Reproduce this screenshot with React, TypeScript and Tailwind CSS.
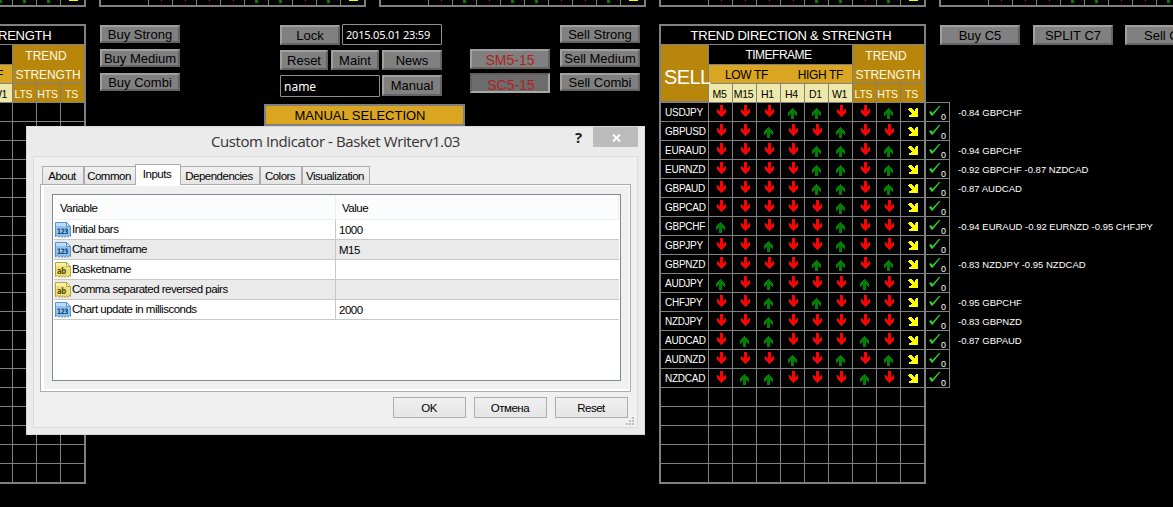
import type { ReactNode } from "react";
import clsx from "clsx";

type Row = { pair: string; signals: string; note?: string };

// u = up, d = down, one letter per column from M5 to HTS
const sellRows: Row[] = [
  { pair: "USDJPY", signals: "ddduuddu", note: "-0.84 GBPCHF" },
  { pair: "GBPUSD", signals: "dduddudd" },
  { pair: "EURAUD", signals: "dddduudu", note: "-0.94 GBPCHF" },
  { pair: "EURNZD", signals: "dddduudu", note: "-0.92 GBPCHF -0.87 NZDCAD" },
  { pair: "GBPAUD", signals: "dddduudu", note: "-0.87 AUDCAD" },
  { pair: "GBPCAD", signals: "dddddudd" },
  { pair: "GBPCHF", signals: "uddddudd", note: "-0.94 EURAUD -0.92 EURNZD -0.95 CHFJPY" },
  { pair: "GBPJPY", signals: "dduddudd" },
  { pair: "GBPNZD", signals: "dddduudu", note: "-0.83 NZDJPY -0.95 NZDCAD" },
  { pair: "AUDJPY", signals: "ududddud" },
  { pair: "CHFJPY", signals: "ddududdd", note: "-0.95 GBPCHF" },
  { pair: "NZDJPY", signals: "dduddddd", note: "-0.83 GBPNZD" },
  { pair: "AUDCAD", signals: "duudddud", note: "-0.87 GBPAUD" },
  { pair: "AUDNZD", signals: "dddududu" },
  { pair: "NZDCAD", signals: "duudddud" },
];

const upperTables = ["dddduuuu", "dddduudu", "duduuddu", "dddduudu", "ddduuddu"];
const timeframes = ["M5", "M15", "H1", "H4", "D1", "W1"];

const inputs = [
  { kind: "123", name: "Initial bars", value: "1000" },
  { kind: "123", name: "Chart timeframe", value: "M15" },
  { kind: "ab", name: "Basketname", value: "" },
  { kind: "ab", name: "Comma separated reversed pairs", value: "" },
  { kind: "123", name: "Chart update in millisconds", value: "2000" },
];

function Arrow({ dir }: { dir: string }) {
  return (
    <svg width="23" height="18" viewBox="0 0 23 18" className="block" shapeRendering="crispEdges">
      {dir === "d" && <path fill="#ff0000" d="M11 2h3v6h1v-1h1v-1h1v4h-1v1h-1v1h-1v1h-1v1h-1v-1h-1v-1h-1v-1h-1v-1h-1v-4h1v1h1v1h1z" />}
      {dir === "u" && <path fill="#008000" d="M11 5h1v1h1v1h1v1h1v1h1v4h-1v-1h-1v-1h-1v5h-3v-5h-1v1h-1v1h-1v-4h1v-1h1v-1h1v-1h1z" />}
      {dir === "s" && <path fill="#ffff00" d="M8 5h3v1h1v1h1v1h1v-2h1v-1h2v9h-9v-2h2v-1h1v-1h-1v-1h-1v-1h-1v-1h-1v-1h1z" />}
    </svg>
  );
}

function Cell({ className, children }: { className?: string; children?: ReactNode }) {
  return <div className={clsx("min-w-0 whitespace-nowrap", className ?? "bg-black")}>{children}</div>;
}

function SignalCells({ signals }: { signals: string }) {
  return (
    <>
      {(signals ? signals + "s" : "         ").split("").map((s, i) => (
        <Cell key={i}><Arrow dir={s} /></Cell>
      ))}
    </>
  );
}

function TrendTable({ side, rows }: { side: string; rows: Row[] }) {
  const all = Array.from({ length: 20 }, (_, i) => rows[i] ?? { pair: "", signals: "" });
  return (
    <div className="grid h-[460px] w-[267px] shrink-0 grid-cols-[47px_repeat(9,23px)] grid-rows-[18px_19px_18px_18px_repeat(20,18px)] gap-px border-2 border-[#808080] bg-[#808080] text-white">
      <Cell className="col-span-10 bg-black pr-[3px] text-center text-[13px] leading-[19px] tracking-[-0.25px]">TREND DIRECTION &amp; STRENGTH</Cell>
      <Cell className="row-span-3 mb-px bg-[#b8860b] pl-[3px] pt-[21px] text-[20px] leading-[23px] tracking-[-0.6px]"><span className="relative">{side}</span></Cell>
      <Cell className="col-span-6 bg-black pr-[4px] text-center text-[12px] leading-[20px] tracking-[-0.5px]">TIMEFRAME</Cell>
      <Cell className="col-span-3 row-span-2 bg-[#b8860b] pt-[2px] text-center text-[12px] leading-[19px] text-[#fffbe8]">
        <div className="pr-[5px]">TREND</div>
        <div className="pr-px tracking-[-0.1px]">STRENGTH</div>
      </Cell>
      <Cell className="col-span-6 flex justify-between bg-[#daa520] pl-[16px] pr-[9px] text-[12px] leading-[20px] tracking-[-0.35px] text-black"><span>LOW TF</span><span>HIGH TF</span></Cell>
      {timeframes.map((tf) => (
        <Cell key={tf} className="bg-[#eee8aa] pr-[2px] text-center text-[10.5px] leading-[20px] tracking-[-0.3px] text-black">{tf}</Cell>
      ))}
      {["LTS", "HTS", "TS"].map((t) => (
        <Cell key={t} className="bg-[#b8860b] pr-[2px] text-center text-[10.5px] leading-[20px] tracking-[-0.2px] text-[#fffbe8]">{t}</Cell>
      ))}
      {all.map((row, i) => (
        <div key={i} className="contents">
          <Cell className="bg-black pl-[4px] text-[10px] leading-[19px] tracking-[-0.25px]">{row.pair}</Cell>
          <SignalCells signals={row.signals} />
        </div>
      ))}
    </div>
  );
}

function ChartButton({ className, pressed, children }: { className: string; pressed?: boolean; children: string }) {
  return (
    <button
      className={clsx(
        "flex shrink-0 items-center justify-center whitespace-nowrap border-2 leading-none",
        pressed
          ? "border-b-[#a9a9a9] border-l-[#606060] border-r-[#a9a9a9] border-t-[#606060] bg-[#6c6c6c]"
          : "border-b-[#646464] border-l-[#a0a0a0] border-r-[#646464] border-t-[#a0a0a0] bg-[#808080]",
        className,
      )}
    >
      {children}
    </button>
  );
}

function SideButtons({ side }: { side: string }) {
  return (
    <div className="flex w-[80px] shrink-0 flex-col gap-[6px] pt-px text-[13px]">
      {["Strong", "Medium", "Combi"].map((n) => <ChartButton key={n} className="h-[18px] w-[80px]">{`${side} ${n}`}</ChartButton>)}
    </div>
  );
}

function ControlPanel() {
  return (
    <div className="w-[201px] shrink-0 text-[13px]">
      <div className="flex h-[26px] gap-[2px] pl-[16px]">
        <ChartButton className="mt-px h-[20px] w-[60px]">Lock</ChartButton>
        <div className="h-[21px] w-[100px] rounded-[1px] border border-[#909090] bg-black pl-[3px] font-['Noto_Sans'] text-[11px] leading-[20px] tracking-[-0.2px] text-white">2015.05.01 23:59</div>
      </div>
      <div className="flex h-[25px] gap-[3px] pl-[16px]">
        <ChartButton className="h-[20px] w-[48px]">Reset</ChartButton>
        <ChartButton className="h-[20px] w-[48px]">Maint</ChartButton>
        <ChartButton className="h-[20px] w-[60px]">News</ChartButton>
      </div>
      <div className="flex h-[29px] gap-[2px] pl-[16px]">
        <div className="h-[22px] w-[100px] rounded-[1px] border border-[#909090] bg-black pl-[3px] font-['Noto_Sans'] text-[12px] leading-[21px] text-white">name</div>
        <ChartButton className="h-[21px] w-[60px]">Manual</ChartButton>
      </div>
      <div className="h-[22px] border-2 border-[#808080] bg-[#daa520] pr-[9px] text-center text-[13px] leading-[19px] text-black">MANUAL SELECTION</div>
    </div>
  );
}

function InputIcon({ kind }: { kind: string }) {
  const num = kind === "123";
  return (
    <svg width="16" height="16" viewBox="0 0 16 16" className="shrink-0">
      <path d="M.5.5h11l4 4v10l-1.2-1.2-1.3 1.9-1.5-1.7-1.5 1.9-1.5-1.7L7 15.5l-1.5-2L4 15.200 2.500 13.500.500 14.800z" fill={num ? "#8fc3f0" : "#ece07c"} stroke={num ? "#5b93c6" : "#b5a53e"} />
      <path d="M1 1h10v3H1z" fill={num ? "#b9dcfa" : "#f8f0a4"} />
      <path d="M11.5.5v4h4z" fill={num ? "#dcefff" : "#fffbd0"} stroke={num ? "#5b93c6" : "#b5a53e"} />
      <text x="2" y="11.5" fontFamily="DejaVu Sans" fontWeight="bold" fontSize={num ? 7.5 : 9} textLength={num ? 11 : 9} lengthAdjust="spacingAndGlyphs" fill={num ? "#123c68" : "#5c5000"}>{kind}</text>
    </svg>
  );
}

function Tab({ className, children }: { className: string; children: string }) {
  return <div className={clsx("h-[18px] shrink-0 border border-b-0 border-[#acacac] bg-linear-to-b from-[#f0f0f0] to-[#e5e5e5] pr-[2px] text-center leading-[19px]", className)}>{children}</div>;
}

function IndicatorDialog() {
  return (
    <div className="absolute left-[26px] top-[126px] h-[309px] w-[619px] border border-[#d9d9d9] bg-[#ebebeb] px-[6px] text-[11.5px] tracking-[-0.5px] text-black">
      <div className="flex h-[29px] items-start">
        <div className="w-[536px] pl-[178px] font-['Open_Sans'] text-[15px] leading-[29px] tracking-[-0.42px] text-[#333]">Custom Indicator - Basket Writerv1.03</div>
        <div className="w-[24px] pl-[6px] font-['Open_Sans'] text-[15px] font-bold leading-[20px] text-[#222]">?</div>
        <div className="flex h-[20px] w-[45px] items-center justify-center bg-[#bcbcbc] pl-px pt-px">
          <svg width="9" height="8" viewBox="0 0 9 8"><path d="M1 .5l7 7M8 .5l-7 7" stroke="#fff" strokeWidth="1.8" /></svg>
        </div>
      </div>
      <div className="h-[272px] w-[605px] border border-[#dcdcdc] bg-[#f0f0f0] px-[6px] pt-[7px]">
        <div className="relative -mb-px flex h-[21px] items-end pb-px pl-[2px]">
          <Tab className="w-[42px]">About</Tab>
          <Tab className="w-[52px]">Common</Tab>
          <div className="-mb-px -ml-px h-[21px] w-[46px] border border-b-0 border-[#acacac] bg-white pr-[2px] text-center leading-[19px]">Inputs</div>
          <Tab className="-ml-px w-[80px]">Dependencies</Tab>
          <Tab className="w-[42px]">Colors</Tab>
          <Tab className="w-[68px]">Visualization</Tab>
        </div>
        <div className="h-[208px] w-[591px] border border-[#acacac] bg-white pb-[2px] pl-[3px] pr-px pt-px">
          <div className="h-full bg-[#f0f0f0] px-[8px] pt-[8px]">
            <div className="h-[187px] w-[569px] border border-[#828790] bg-white px-px">
              <div className="flex h-[25px] border-b border-r border-[#e6eef6] bg-[#fcfcfc] leading-[26px]">
                <div className="w-[282px] border-r border-[#e6eef6] pl-[6px]">Variable</div>
                <div className="pl-[6px]">Value</div>
              </div>
              {inputs.map((row, i) => (
                <div key={row.name} className={clsx("flex h-[20px] border-b border-[#c8c8c8]", i % 2 ? "bg-[#eaeaea]" : "bg-white")}>
                  <div className="flex w-[282px] items-center gap-px border-r border-[#c8c8c8] pl-px pt-px"><InputIcon kind={row.kind} /><span>{row.name}</span></div>
                  <div className="pl-[3px] leading-[20px]">{row.value}</div>
                </div>
              ))}
            </div>
          </div>
        </div>
        <div className="flex gap-[8px] pl-[353px] pt-[5px]">
          {["OK", "Отмена", "Reset"].map((label) => (
            <button key={label} className="h-[21px] w-[73px] border border-[#adadad] bg-linear-to-b from-[#f0f0f0] to-[#e5e5e5] pr-px text-center leading-[20px]">{label}</button>
          ))}
        </div>
      </div>
      <svg width="8" height="8" viewBox="0 0 8 8" className="absolute bottom-[9px] right-[10px]" fill="#bfbfbf">
        <path d="M6 0h2v2H6zM3 3h2v2H3zM6 3h2v2H6zM0 6h2v2H0zM3 6h2v2H3zM6 6h2v2H6z" />
      </svg>
    </div>
  );
}

export default function App() {
  return (
    <div className="relative h-[507px] w-[1173px] overflow-hidden bg-black font-['Liberation_Sans',sans-serif] text-black">
      <div className="-ml-[181px] flex h-[7px] w-[1400px] items-end gap-[13px] overflow-hidden">
        {upperTables.map((signals, i) => (
          <div key={i} className="grid w-[267px] grid-cols-[47px_repeat(9,23px)] gap-px border-2 border-[#808080] bg-[#808080]">
            <Cell />
            <SignalCells signals={signals} />
          </div>
        ))}
      </div>
      <div className="-ml-[181px] mt-[17px] flex w-[1500px] items-start">
        <TrendTable side="BUY" rows={[]} />
        <div className="w-[14px] shrink-0" />
        <SideButtons side="Buy" />
        <div className="w-[84px] shrink-0" />
        <ControlPanel />
        <div className="mx-[5px] flex w-[80px] shrink-0 flex-col gap-[4px] pt-[25px] text-[14px] text-[#b22222]">
          <ChartButton className="h-[20px] w-[80px] pt-px">SM5-15</ChartButton>
          <ChartButton className="h-[20px] w-[80px] pl-[2px] pt-[3px]" pressed>SC5-15</ChartButton>
        </div>
        <div className="w-[5px] shrink-0" />
        <SideButtons side="Sell" />
        <div className="w-[19px] shrink-0" />
        <TrendTable side="SELL" rows={sellRows} />
        <div className="shrink-0">
          <div className="flex h-[78px] pl-[14px] pt-px text-[13px]">
            <ChartButton className="mr-[13px] h-[20px] w-[80px] pt-px">Buy C5</ChartButton>
            <ChartButton className="mr-[12px] h-[20px] w-[80px] pt-px">SPLIT C7</ChartButton>
            <ChartButton className="h-[20px] w-[80px] pt-px">Sell C7</ChartButton>
          </div>
          <div className="w-[24px] border-t border-[#808080]">
            {sellRows.map((row) => (
              <div key={row.pair} className="flex h-[19px]">
                <div className="flex w-[24px] shrink-0 border-b border-r border-[#808080]">
                  <svg width="15" height="18" viewBox="0 0 15 18" className="shrink-0"><path d="M3 9l2-1 1.500 2L13 3l1.500 0L6.500 12.700H5.500z" fill="#32cd32" /></svg>
                  <span className="pt-[10px] text-[9px] leading-[9px] text-white">0</span>
                </div>
                <span className="whitespace-nowrap pl-[8px] text-[9.5px] leading-[19px] text-white">{row.note}</span>
              </div>
            ))}
          </div>
        </div>
      </div>
      <IndicatorDialog />
    </div>
  );
}
